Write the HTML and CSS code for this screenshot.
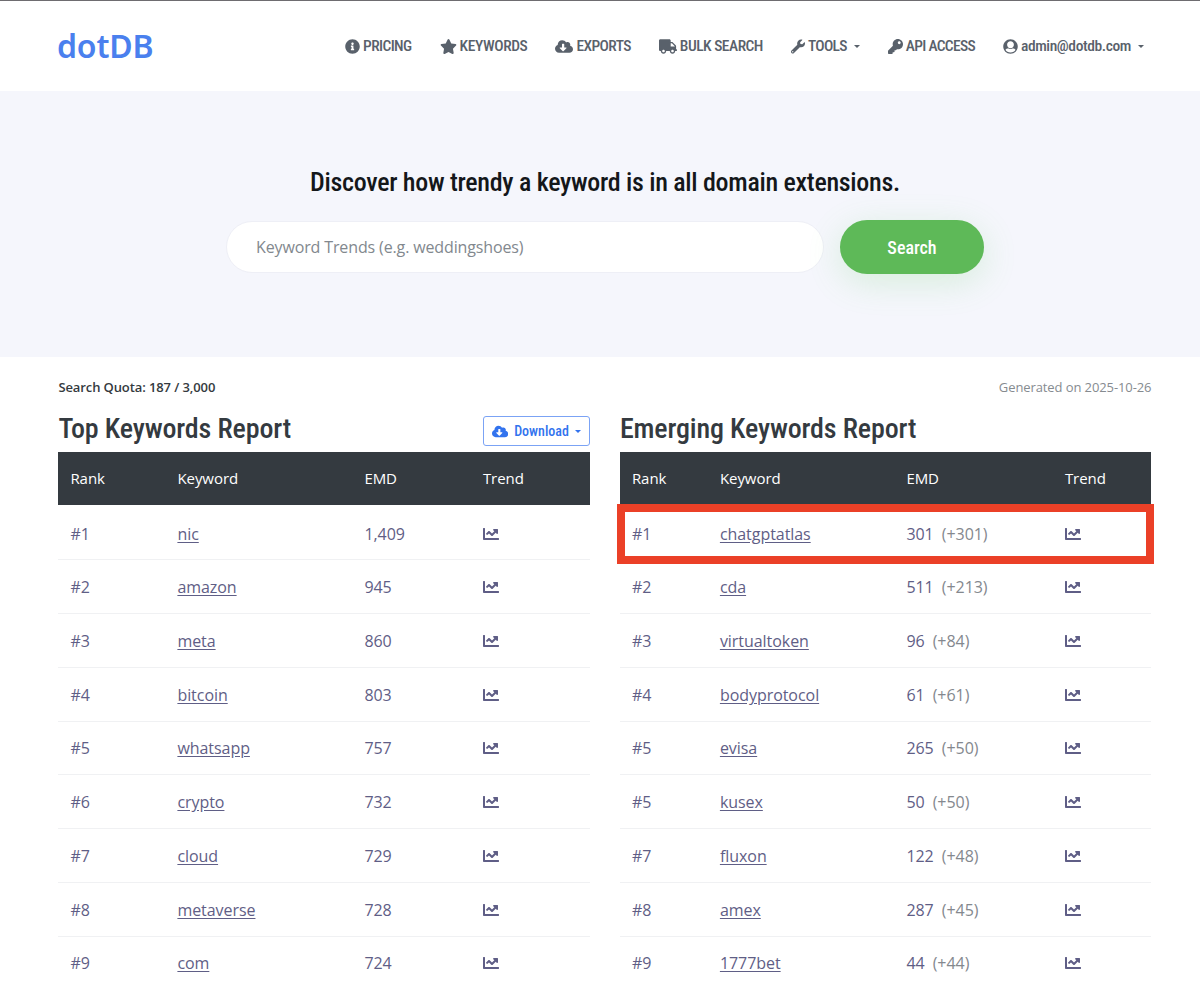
FILE: index.html
```html
<!DOCTYPE html>
<html lang="en">
<head>
    <meta charset="UTF-8">
    <meta name="viewport" content="width=device-width, initial-scale=1.0">
    <title>Keyword Trends - dotDB</title>
    <link rel="stylesheet" href="styles.css">
</head>
<body>
    <!-- Icon sprite -->
    <svg class="sprite">
        <symbol id="i-info" viewBox="0 0 512 512"><path d="M256 8C119.043 8 8 119.083 8 256c0 136.997 111.043 248 248 248s248-111.003 248-248C504 119.083 392.957 8 256 8zm0 110c23.196 0 42 18.804 42 42s-18.804 42-42 42-42-18.804-42-42 18.804-42 42-42zm56 254c0 6.627-5.373 12-12 12h-88c-6.627 0-12-5.373-12-12v-24c0-6.627 5.373-12 12-12h12v-64h-12c-6.627 0-12-5.373-12-12v-24c0-6.627 5.373-12 12-12h64c6.627 0 12 5.373 12 12v100h12c6.627 0 12 5.373 12 12v24z"/></symbol>
        <symbol id="i-star" viewBox="0 0 576 512"><path d="M259.3 17.8L194 150.2 47.9 171.5c-26.2 3.8-36.7 36.1-17.7 54.6l105.7 103-25 145.5c-4.5 26.3 23.2 46 46.4 33.7L288 439.6l130.7 68.7c23.2 12.2 50.9-7.4 46.4-33.7l-25-145.5 105.7-103c19-18.5 8.5-50.8-17.7-54.6L382 150.2 316.7 17.8c-11.7-23.6-45.6-23.9-57.4 0z"/></symbol>
        <symbol id="i-cloud" viewBox="0 0 640 512"><path d="M537.6 226.6c4.1-10.7 6.4-22.4 6.4-34.6 0-53-43-96-96-96-19.7 0-38.1 6-53.3 16.2C367 64.2 315.3 32 256 32c-88.4 0-160 71.6-160 160 0 2.7.1 5.4.2 8.1C40.2 219.8 0 273.2 0 336c0 79.5 64.5 144 144 144h368c70.7 0 128-57.3 128-128 0-61.9-44-113.6-102.4-125.4zm-132.9 88.7L299.3 420.7c-6.2 6.2-16.4 6.2-22.6 0L171.3 315.3c-10.1-10.1-2.9-27.3 11.3-27.3H248V176c0-8.8 7.2-16 16-16h48c8.8 0 16 7.2 16 16v112h65.4c14.2 0 21.4 17.2 11.3 27.3z"/></symbol>
        <symbol id="i-truck" viewBox="0 0 640 512"><path d="M624 352h-16V243.9c0-12.7-5.1-24.9-14.1-33.9L494 110.1c-9-9-21.2-14.1-33.9-14.1H416V48c0-26.5-21.5-48-48-48H48C21.5 0 0 21.5 0 48v320c0 26.5 21.5 48 48 48h16c0 53 43 96 96 96s96-43 96-96h128c0 53 43 96 96 96s96-43 96-96h48c8.8 0 16-7.2 16-16v-32c0-8.8-7.2-16-16-16zM160 464c-26.5 0-48-21.5-48-48s21.5-48 48-48 48 21.5 48 48-21.5 48-48 48zm320 0c-26.5 0-48-21.5-48-48s21.5-48 48-48 48 21.5 48 48-21.5 48-48 48zm80-208H416V144h44.1l99.9 99.9V256z"/></symbol>
        <symbol id="i-wrench" viewBox="0 0 512 512"><path d="M507.73 109.1c-2.24-9.03-13.54-12.09-20.12-5.51l-74.36 74.36-67.88-11.31-11.31-67.88 74.36-74.36c6.62-6.62 3.43-17.9-5.66-20.16-47.38-11.74-99.55.91-136.58 37.93-39.64 39.64-50.55 97.1-34.05 147.2L18.74 402.76c-24.99 24.99-24.99 65.51 0 90.5 24.99 24.99 65.51 24.99 90.5 0l213.21-213.21c50.12 16.71 107.47 5.68 147.37-34.22 37.07-37.07 49.7-89.32 37.91-136.73zM64 472c-13.25 0-24-10.75-24-24 0-13.26 10.75-24 24-24s24 10.74 24 24c0 13.25-10.75 24-24 24z"/></symbol>
        <symbol id="i-key" viewBox="0 0 512 512"><path d="M512 176.001C512 273.203 433.202 352 336 352c-11.22 0-22.19-1.062-32.827-3.069l-24.012 27.014A23.999 23.999 0 0 1 261.223 384H224v40c0 13.255-10.745 24-24 24h-40v40c0 13.255-10.745 24-24 24H24c-13.255 0-24-10.745-24-24v-78.059c0-6.365 2.529-12.47 7.029-16.971l161.802-161.802C163.108 213.814 160 195.271 160 176 160 78.798 238.797.001 335.999 0 433.488-.001 512 78.511 512 176.001zM336 128c0 26.51 21.49 48 48 48s48-21.49 48-48-21.49-48-48-48-48 21.49-48 48z"/></symbol>
        <symbol id="i-user" viewBox="0 0 496 512"><path d="M248 8C111 8 0 119 0 256s111 248 248 248 248-111 248-248S385 8 248 8zm0 72c68 0 116 50 116 116s-48 116-116 116-116-50-116-116 48-116 116-116zm0 384c-78 0-140-40-172-96 22-30 52-44 88-44 30 0 50 18 84 18s54-18 84-18c36 0 66 14 88 44-32 56-94 96-172 96z"/></symbol>
        <symbol id="i-chart" viewBox="0 0 512 512"><path d="M496 384H64V80c0-8.84-7.16-16-16-16H16C7.16 64 0 71.16 0 80v336c0 17.67 14.33 32 32 32h464c8.84 0 16-7.16 16-16v-32c0-8.84-7.16-16-16-16zM464 96H345.94c-21.38 0-32.09 25.85-16.97 40.97l32.4 32.4L288 242.75l-73.37-73.37c-12.5-12.5-32.76-12.5-45.25 0l-68.69 68.69c-6.25 6.25-6.25 16.38 0 22.63l22.62 22.62c6.25 6.25 16.38 6.25 22.63 0L192 237.25l73.37 73.37c12.5 12.5 32.76 12.5 45.25 0l96-96 32.4 32.4c15.12 15.12 40.97 4.41 40.97-16.97V112c.01-8.84-7.15-16-15.99-16z"/></symbol>
    </svg>

    <div class="header">
        <a class="logo">dotDB</a>
        <div class="nav">
            <a class="nav-pricing"><svg class="icon"><use href="#i-info"/></svg>PRICING</a>
            <a class="nav-keywords"><svg class="icon"><use href="#i-star"/></svg>KEYWORDS</a>
            <a class="nav-exports"><svg class="icon icon-wide"><use href="#i-cloud"/></svg>EXPORTS</a>
            <a class="nav-bulk"><svg class="icon icon-wide"><use href="#i-truck"/></svg>BULK SEARCH</a>
            <a class="nav-tools"><svg class="icon"><use href="#i-wrench"/></svg>TOOLS<span class="caret"></span></a>
            <a class="nav-api"><svg class="icon"><use href="#i-key"/></svg>API ACCESS</a>
            <a class="nav-user"><svg class="icon"><use href="#i-user"/></svg>admin@dotdb.com<span class="caret"></span></a>
        </div>
    </div>

    <div class="hero">
        <h1>Discover how trendy a keyword is in all domain extensions.</h1>
        <div class="search">
            <input type="text" placeholder="Keyword Trends (e.g. weddingshoes)">
            <button>Search</button>
        </div>
    </div>

    <div class="container">
        <div class="info">
            <span class="quota">Search Quota: 187 / 3,000</span>
            <span class="generated">Generated on 2025-10-26</span>
        </div>

        <div class="reports">
            <div class="report">
                <div class="report-title">
                    <h2>Top Keywords Report</h2>
                    <button class="download"><svg class="icon icon-wide"><use href="#i-cloud"/></svg>Download<span class="caret"></span></button>
                </div>
                <table class="top">
                    <thead>
                        <tr><th class="rank">Rank</th><th class="keyword">Keyword</th><th class="emd">EMD</th><th>Trend</th></tr>
                    </thead>
                    <tbody>
                        <tr><td>#1</td><td><a>nic</a></td><td>1,409</td><td><svg class="chart"><use href="#i-chart"/></svg></td></tr>
                        <tr><td>#2</td><td><a>amazon</a></td><td>945</td><td><svg class="chart"><use href="#i-chart"/></svg></td></tr>
                        <tr><td>#3</td><td><a>meta</a></td><td>860</td><td><svg class="chart"><use href="#i-chart"/></svg></td></tr>
                        <tr><td>#4</td><td><a>bitcoin</a></td><td>803</td><td><svg class="chart"><use href="#i-chart"/></svg></td></tr>
                        <tr><td>#5</td><td><a>whatsapp</a></td><td>757</td><td><svg class="chart"><use href="#i-chart"/></svg></td></tr>
                        <tr><td>#6</td><td><a>crypto</a></td><td>732</td><td><svg class="chart"><use href="#i-chart"/></svg></td></tr>
                        <tr><td>#7</td><td><a>cloud</a></td><td>729</td><td><svg class="chart"><use href="#i-chart"/></svg></td></tr>
                        <tr><td>#8</td><td><a>metaverse</a></td><td>728</td><td><svg class="chart"><use href="#i-chart"/></svg></td></tr>
                        <tr><td>#9</td><td><a>com</a></td><td>724</td><td><svg class="chart"><use href="#i-chart"/></svg></td></tr>
                    </tbody>
                </table>
            </div>

            <div class="report">
                <div class="report-title">
                    <h2>Emerging Keywords Report</h2>
                </div>
                <table class="emerging">
                    <thead>
                        <tr><th class="rank">Rank</th><th class="keyword">Keyword</th><th class="emd">EMD</th><th>Trend</th></tr>
                    </thead>
                    <tbody>
                        <tr><td>#1</td><td><a>chatgptatlas</a></td><td>301 <span class="gain">(+301)</span></td><td><svg class="chart"><use href="#i-chart"/></svg></td></tr>
                        <tr><td>#2</td><td><a>cda</a></td><td>511 <span class="gain">(+213)</span></td><td><svg class="chart"><use href="#i-chart"/></svg></td></tr>
                        <tr><td>#3</td><td><a>virtualtoken</a></td><td>96 <span class="gain">(+84)</span></td><td><svg class="chart"><use href="#i-chart"/></svg></td></tr>
                        <tr><td>#4</td><td><a>bodyprotocol</a></td><td>61 <span class="gain">(+61)</span></td><td><svg class="chart"><use href="#i-chart"/></svg></td></tr>
                        <tr><td>#5</td><td><a>evisa</a></td><td>265 <span class="gain">(+50)</span></td><td><svg class="chart"><use href="#i-chart"/></svg></td></tr>
                        <tr><td>#5</td><td><a>kusex</a></td><td>50 <span class="gain">(+50)</span></td><td><svg class="chart"><use href="#i-chart"/></svg></td></tr>
                        <tr><td>#7</td><td><a>fluxon</a></td><td>122 <span class="gain">(+48)</span></td><td><svg class="chart"><use href="#i-chart"/></svg></td></tr>
                        <tr><td>#8</td><td><a>amex</a></td><td>287 <span class="gain">(+45)</span></td><td><svg class="chart"><use href="#i-chart"/></svg></td></tr>
                        <tr><td>#9</td><td><a>1777bet</a></td><td>44 <span class="gain">(+44)</span></td><td><svg class="chart"><use href="#i-chart"/></svg></td></tr>
                    </tbody>
                </table>
                <!-- Marks the first row -->
                <div class="highlight"></div>
            </div>
        </div>
    </div>
</body>
</html>
```
FILE: styles.css
```css
* {
    box-sizing: border-box;
}

body {
    font-family: "Open Sans", sans-serif;
    font-size: 16px;
    margin: 0;
    background-color: #fff;
    color: #343a40;
    overflow: hidden;
}

.sprite {
    display: none;
}

.header {
    display: flex;
    justify-content: space-between;
    align-items: center;
    height: 91px;
    padding: 0 56px 0 57px;
    border-top: 1px solid #6e6c70;
}

.logo {
    margin-top: -2px;
    font-family: "Noto Sans", sans-serif;
    font-size: 32px;
    font-weight: 600;
    letter-spacing: -0.2px;
    color: #4a80ee;
}

.nav {
    display: flex;
    gap: 28px;
    font-family: "Roboto Condensed", "Open Sans", sans-serif;
    font-size: 15.5px;
    font-weight: 500;
    letter-spacing: -0.6px;
    color: #59616b;
}

.nav a {
    display: flex;
    align-items: center;
    white-space: nowrap;
}

.icon {
    width: 15px;
    height: 15px;
    margin-right: 3px;
    fill: currentColor;
}

.icon-wide {
    width: 18px;
}

.nav .nav-keywords {
    letter-spacing: -0.4px;
}

.nav-keywords .icon {
    width: 17px;
}

.nav .nav-bulk {
    letter-spacing: -0.5px;
}

.nav-tools .icon {
    width: 14px;
}

.nav .nav-tools,
.nav .nav-api {
    letter-spacing: -0.7px;
}

.nav .nav-user {
    letter-spacing: -0.4px;
}

.caret {
    margin-left: 7px;
    border-top: 3px solid currentColor;
    border-left: 3px solid transparent;
    border-right: 3px solid transparent;
}

.hero {
    height: 266px;
    padding: 76px 0 0 10px;
    background-color: #f5f6fc;
    text-align: center;
}

.hero h1 {
    margin: 0 0 22px;
    font-family: "Roboto Condensed", sans-serif;
    font-size: 26px;
    font-weight: 500;
    line-height: 31px;
    letter-spacing: -0.3px;
    color: #14171a;
}

.search {
    display: flex;
    justify-content: center;
    align-items: center;
    gap: 16px;
}

.search input {
    width: 598px;
    height: 52px;
    padding: 0 29px;
    border: 1px solid #eeeff6;
    border-radius: 27px;
    background-color: #fff;
    font-family: "Open Sans", sans-serif;
    font-size: 16px;
    letter-spacing: -0.13px;
}

.search input::placeholder {
    color: #82888e;
}

.search button {
    width: 144px;
    height: 54px;
    border: none;
    border-radius: 27px;
    background-color: #5eb958;
    box-shadow: 0 8px 35px rgba(94, 205, 88, 0.2);
    font-family: "Roboto Condensed", sans-serif;
    font-size: 18px;
    font-weight: 500;
    color: #fff;
}

.container {
    width: 1093px;
    margin-left: 58.4px;
}

.info {
    display: flex;
    justify-content: space-between;
    padding-top: 20px;
    font-size: 13px;
    line-height: 20px;
    letter-spacing: -0.1px;
}

.quota {
    font-weight: 600;
}

.generated {
    color: #868b90;
}

.reports {
    display: flex;
    justify-content: space-between;
    margin-top: 16px;
}

.report {
    position: relative;
    width: 531.5px;
}

.report-title {
    display: flex;
    justify-content: space-between;
    height: 39px;
}

.report-title h2 {
    margin: 0;
    font-family: "Roboto Condensed", sans-serif;
    font-size: 28px;
    font-weight: 500;
    line-height: 32px;
    letter-spacing: -0.14px;
}

.download {
    display: flex;
    align-items: center;
    width: 107px;
    height: 30px;
    margin-top: 3px;
    padding: 0 8px;
    border: 1px solid #7ba3f5;
    border-radius: 3px;
    background-color: #fff;
    font-family: "Roboto Condensed", sans-serif;
    font-size: 14px;
    font-weight: 500;
    color: #3273ee;
}

.download .icon {
    margin-right: 6px;
}

.download .caret {
    margin-left: 6px;
}

table {
    width: 100%;
    table-layout: fixed;
    border-collapse: separate;
    border-spacing: 0;
    letter-spacing: -0.05px;
}

th {
    height: 53px;
    padding: 0 12px 2px;
    background-color: #343a40;
    font-weight: 400;
    font-size: 15px;
    text-align: left;
    color: #fff;
}

td {
    height: 53.75px;
    padding: 1px 12px 0;
    border-bottom: 1px solid #f0f1f3;
    color: #5f5e86;
}

tbody tr:first-child td {
    height: 55.25px;
    padding-top: 3px;
}

td a {
    text-decoration: underline;
    text-underline-offset: 2px;
}

.top .rank {
    width: 107px;
}

.top .keyword {
    width: 187px;
}

.top .emd {
    width: 118.5px;
}

.emerging .rank {
    width: 88px;
}

.emerging .keyword {
    width: 186.5px;
}

.emerging .emd {
    width: 158.5px;
}

.gain {
    margin-left: 4px;
    color: #84888e;
}

.chart {
    display: block;
    width: 16px;
    height: 16px;
    fill: currentColor;
}

.highlight {
    position: absolute;
    top: 91px;
    left: -3px;
    width: 537px;
    height: 60px;
    border: 8px solid #eb4027;
}
```
